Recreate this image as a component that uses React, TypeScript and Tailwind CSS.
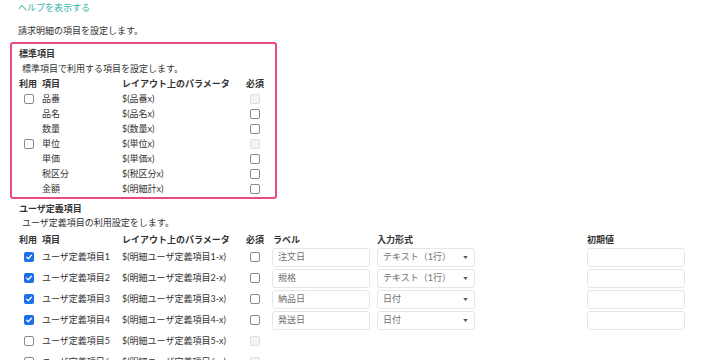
type BoxState = 'on' | 'off' | 'disabled' | 'none';

const STANDARD: { name: string; param: string; use: BoxState; req: BoxState }[] = [
  { name: '品番', param: '$(品番x)', use: 'off', req: 'disabled' },
  { name: '品名', param: '$(品名x)', use: 'none', req: 'off' },
  { name: '数量', param: '$(数量x)', use: 'none', req: 'off' },
  { name: '単位', param: '$(単位x)', use: 'off', req: 'disabled' },
  { name: '単価', param: '$(単価x)', use: 'none', req: 'off' },
  { name: '税区分', param: '$(税区分x)', use: 'none', req: 'off' },
  { name: '金額', param: '$(明細計x)', use: 'none', req: 'off' },
];

const USER = [
  { n: 1, on: true, label: '注文日', type: 'テキスト（1行）' },
  { n: 2, on: true, label: '規格', type: 'テキスト（1行）' },
  { n: 3, on: true, label: '納品日', type: '日付' },
  { n: 4, on: true, label: '発送日', type: '日付' },
  { n: 5, on: false, label: '', type: '' },
  { n: 6, on: false, label: '', type: '' },
];

function Box({ state }: { state: BoxState }) {
  if (state === 'none') return null;
  if (state === 'on') {
    return (
      <span className="flex w-[10px] h-[10px] items-center justify-center rounded-[2px] bg-[#1b6fe8]">
        <svg viewBox="0 0 10 10" className="w-[8px] h-[8px]">
          <path d="M2 5.2 4.1 7.2 8 2.8" fill="none" stroke="#fff" strokeWidth="1.6" strokeLinecap="round" strokeLinejoin="round" />
        </svg>
      </span>
    );
  }
  if (state === 'disabled') {
    return <span className="block w-[10px] h-[10px] rounded-[2px] border border-[#dedede] bg-[#f4f4f4]" />;
  }
  return <span className="block w-[10px] h-[10px] rounded-[2px] border border-[#8a8a8a] bg-white" />;
}

export default function App() {
  return (
    <div
      className="w-[720px] h-[360px] overflow-hidden bg-white text-[9px] text-[#333]"
      style={{ fontFamily: 'Lato, "Noto Sans CJK JP", sans-serif' }}
    >
      <div className="px-[18px] pt-[1px] leading-[14px]">
        <div className="text-[#36b4a9]">ヘルプを表示する</div>
        <div className="mt-[9px]">請求明細の項目を設定します。</div>
      </div>

      <div className="ml-[10px] mt-[4px] w-[267px] rounded-[3px] border-2 border-[#ea4a80] px-[7px] pt-[2px] pb-[1px] leading-[15px]">
        <div className="font-bold">標準項目</div>
        <div className="pl-[3px]">標準項目で利用する項目を設定します。</div>
        <div className="flex font-bold">
          <span className="w-[23px]">利用</span>
          <span className="w-[80px]">項目</span>
          <span className="w-[124px]">レイアウト上のパラメータ</span>
          <span>必須</span>
        </div>
        {STANDARD.map((r) => (
          <div key={r.name} className="flex h-[15px] items-center">
            <span className="w-[23px] pl-[5px]">
              <Box state={r.use} />
            </span>
            <span className="w-[80px]">{r.name}</span>
            <span className="w-[124px]">{r.param}</span>
            <span className="pl-[4px]">
              <Box state={r.req} />
            </span>
          </div>
        ))}
      </div>

      <div className="ml-[19px] mt-[3px]">
        <div className="font-bold leading-[14px]">ユーザ定義項目</div>
        <div className="pl-[3px] leading-[14px]">ユーザ定義項目の利用設定をします。</div>
        <div className="mt-[1.5px] flex font-bold leading-[15px]">
          <span className="w-[23px]">利用</span>
          <span className="w-[80px]">項目</span>
          <span className="w-[124px]">レイアウト上のパラメータ</span>
          <span className="w-[26px]">必須</span>
          <span className="w-[105px] pl-[1px]">ラベル</span>
          <span className="w-[210px]">入力形式</span>
          <span>初期値</span>
        </div>
        {USER.map((r) => (
          <div key={r.n} className="flex h-[21px] items-center">
            <span className="w-[23px] pl-[5px]">
              <Box state={r.on ? 'on' : 'off'} />
            </span>
            <span className="w-[80px]">ユーザ定義項目{r.n}</span>
            <span className="w-[124px]">$(明細ユーザ定義項目{r.n}-x)</span>
            <span className="w-[26px] pl-[4px]">
              <Box state={r.on ? 'off' : 'disabled'} />
            </span>
            {r.on && (
              <>
                <span className="w-[105px]">
                  <span className="flex h-[19px] w-[98px] items-center rounded-[3px] border border-[#e6e6e6] px-[5px] text-[#6f6f6f]">
                    {r.label}
                  </span>
                </span>
                <span className="w-[210px]">
                  <span className="flex h-[19px] w-[98px] items-center justify-between rounded-[3px] border border-[#e6e6e6] pl-[5px] pr-[6px] text-[#6f6f6f]">
                    {r.type}
                    <svg viewBox="0 0 6 4" className="w-[5px] h-[3px]">
                      <path d="M0 0h6L3 4z" fill="#555" />
                    </svg>
                  </span>
                </span>
                <span className="block h-[19px] w-[98px] rounded-[3px] border border-[#e6e6e6]" />
              </>
            )}
          </div>
        ))}
      </div>
    </div>
  );
}
